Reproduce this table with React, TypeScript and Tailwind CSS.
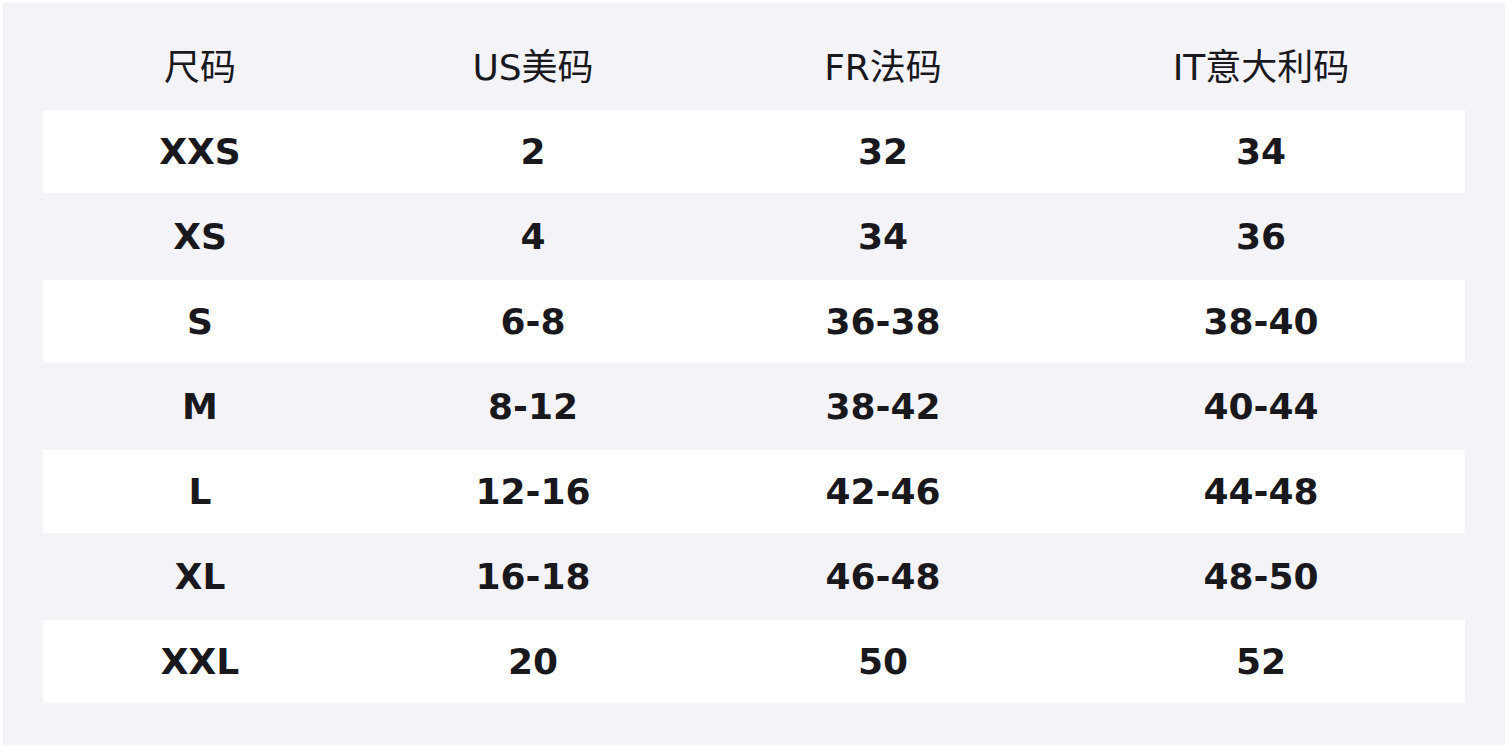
import React from "react";

const rows = [
  ["XXS", "2", "32", "34"],
  ["XS", "4", "34", "36"],
  ["S", "6-8", "36-38", "38-40"],
  ["M", "8-12", "38-42", "40-44"],
  ["L", "12-16", "42-46", "44-48"],
  ["XL", "16-18", "46-48", "48-50"],
  ["XXL", "20", "50", "52"],
];

const headers = ["尺码", "US美码", "FR法码", "IT意大利码"];
const widths = ["w-[314px]", "w-[352px]", "w-[348px]", "w-[408px]"];

export default function App() {
  return (
    <div className="w-[1508px] h-[748px] bg-white p-[3px]">
      <div
        className="w-[1502px] h-[742px] bg-[#f3f3f8] pt-[40px] px-[40px] text-[#18181d]"
        style={{ fontFamily: '"DejaVu Sans", "Noto Sans CJK SC", sans-serif' }}
      >
        <div className="flex h-[67px] items-center pb-[18px] text-[36px] leading-none">
          {headers.map((h, i) => (
            <div key={i} className={`${widths[i]} text-center`}>
              {h}
            </div>
          ))}
        </div>
        {rows.map((r, ri) => (
          <div
            key={ri}
            className={`flex items-center text-[36px] font-bold leading-none ${
              ri % 2 === 0 ? "bg-white h-[83px]" : "h-[87px]"
            }`}
          >
            {r.map((c, ci) => (
              <div key={ci} className={`${widths[ci]} text-center`}>
                {c}
              </div>
            ))}
          </div>
        ))}
      </div>
    </div>
  );
}
